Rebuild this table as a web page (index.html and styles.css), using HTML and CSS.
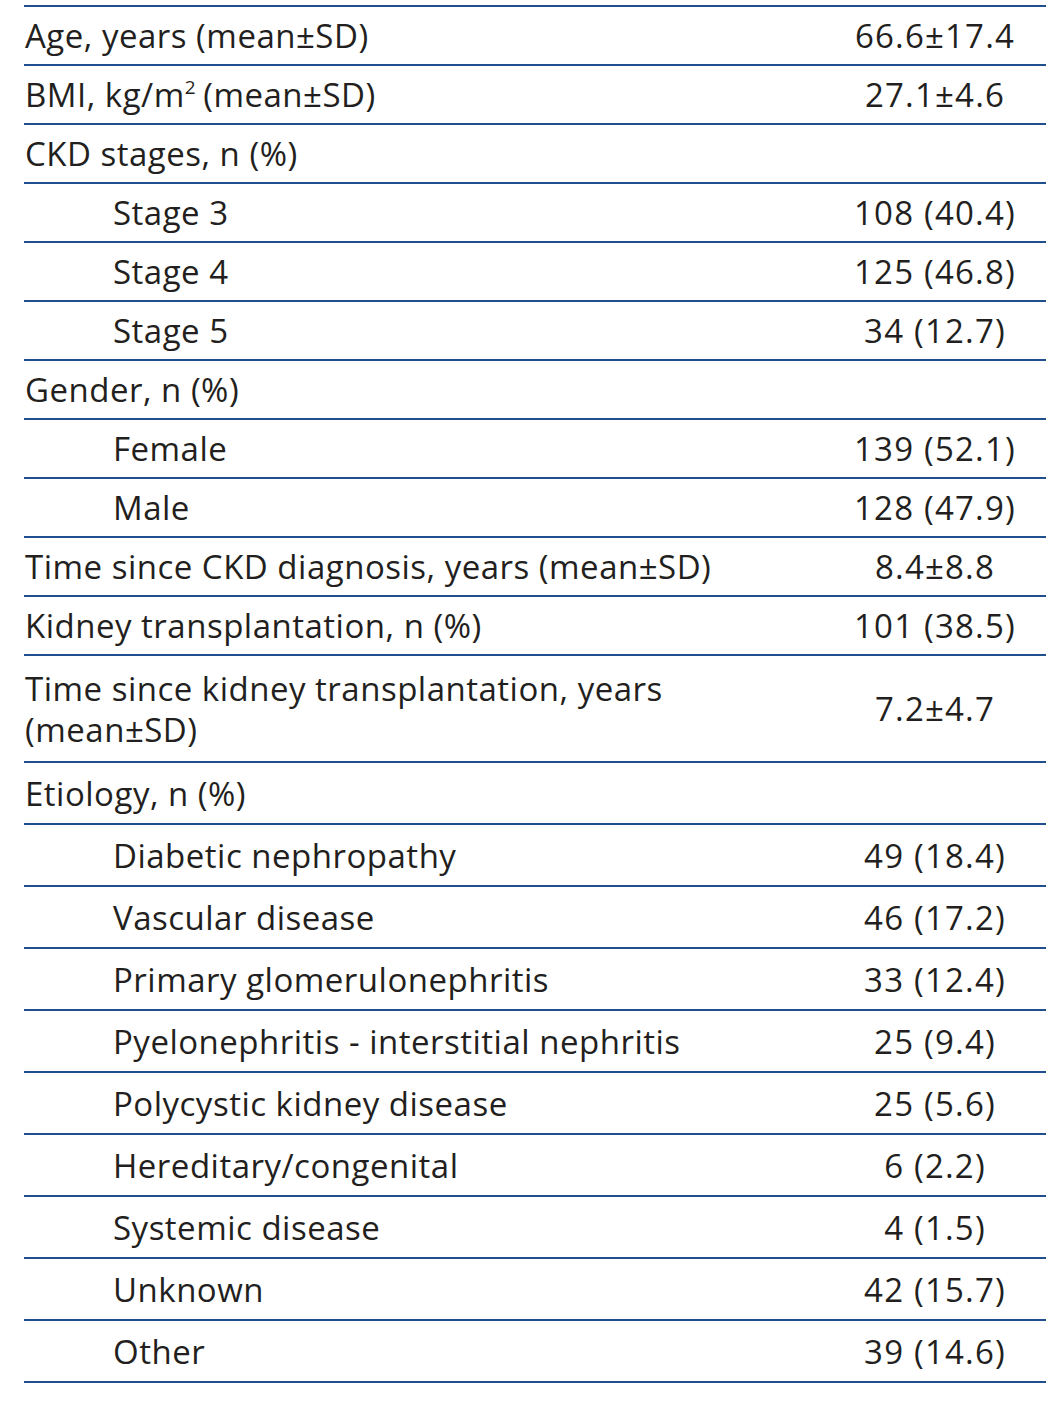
FILE: index.html
```html
<!DOCTYPE html>
<html>
<head>
<meta charset="utf-8">
<link rel="stylesheet" href="styles.css">
</head>
<body>
<div class="table">
  <div class="row"><div class="label">Age, years (mean±SD)</div><div class="value">66.6±17.4</div></div>
  <div class="row"><div class="label">BMI, kg/m<sup class="sup">2</sup> (mean±SD)</div><div class="value">27.1±4.6</div></div>
  <div class="row"><div class="label">CKD stages, n (%)</div><div class="value"></div></div>
  <div class="row"><div class="label sub">Stage 3</div><div class="value">108 (40.4)</div></div>
  <div class="row"><div class="label sub">Stage 4</div><div class="value">125 (46.8)</div></div>
  <div class="row"><div class="label sub">Stage 5</div><div class="value">34 (12.7)</div></div>
  <div class="row"><div class="label">Gender, n (%)</div><div class="value"></div></div>
  <div class="row"><div class="label sub">Female</div><div class="value">139 (52.1)</div></div>
  <div class="row"><div class="label sub">Male</div><div class="value">128 (47.9)</div></div>
  <div class="row"><div class="label">Time since CKD diagnosis, years (mean±SD)</div><div class="value">8.4±8.8</div></div>
  <div class="row"><div class="label">Kidney transplantation, n (%)</div><div class="value">101 (38.5)</div></div>
  <div class="row tall"><div class="label">Time since kidney transplantation, years<br>(mean±SD)</div><div class="value">7.2±4.7</div></div>
  <div class="row mid"><div class="label">Etiology, n (%)</div><div class="value"></div></div>
  <div class="row et"><div class="label sub">Diabetic nephropathy</div><div class="value">49 (18.4)</div></div>
  <div class="row et"><div class="label sub">Vascular disease</div><div class="value">46 (17.2)</div></div>
  <div class="row et"><div class="label sub">Primary glomerulonephritis</div><div class="value">33 (12.4)</div></div>
  <div class="row et"><div class="label sub">Pyelonephritis - interstitial nephritis</div><div class="value">25 (9.4)</div></div>
  <div class="row et"><div class="label sub">Polycystic kidney disease</div><div class="value">25 (5.6)</div></div>
  <div class="row et"><div class="label sub">Hereditary/congenital</div><div class="value">6 (2.2)</div></div>
  <div class="row et"><div class="label sub">Systemic disease</div><div class="value">4 (1.5)</div></div>
  <div class="row et"><div class="label sub">Unknown</div><div class="value">42 (15.7)</div></div>
  <div class="row et"><div class="label sub">Other</div><div class="value">39 (14.6)</div></div>
</div>
</body>
</html>
```
FILE: styles.css
```css
html, body {
  margin: 0;
  padding: 0;
  background: #ffffff;
}
body {
  padding: 5px 15px 0 24px;
  font-family: "Open Sans", "Liberation Sans", sans-serif;
  font-size: 33px;
  letter-spacing: 0.5px;
  color: #231f20;
}
.table {
  width: 1022px;
  border-top: 2px solid #1f4f8c;
}
.row {
  display: flex;
  align-items: center;
  height: 57px;
  border-bottom: 2px solid #1f4f8c;
}
.row.tall {
  height: 105px;
}
.row.mid {
  height: 60px;
}
.row.et {
  height: 60px;
}
.label {
  flex: 1;
  line-height: 41px;
  padding-left: 1px;
  white-space: nowrap;
}
.label.sub {
  padding-left: 89px;
}
.value {
  width: 222px;
  text-align: center;
  letter-spacing: 1.2px;
}
.sup {
  font-size: 19px;
  vertical-align: 13px;
  line-height: 0;
  margin-right: -2px;
}
```
